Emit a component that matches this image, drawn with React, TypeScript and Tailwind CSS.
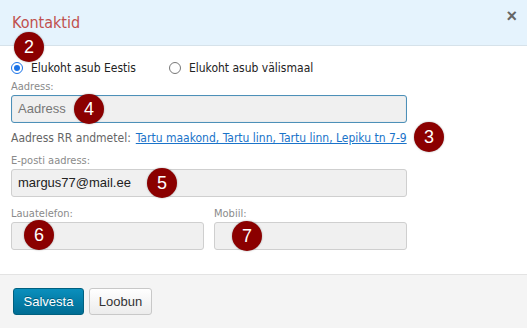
import React from 'react';

const Badge = ({ n, className }: { n: number; className: string }) => (
    <span
        className={`absolute w-[30px] h-[30px] rounded-full bg-[#8b0000] text-white flex items-center justify-center text-[18px] leading-none shadow-[0_0_2px_rgba(0,0,0,0.35)] font-['Liberation_Sans',Arial,sans-serif] ${className}`}
    >
        {n}
    </span>
);

const Label = ({ children }: { children: React.ReactNode }) => (
    <div className="text-[11px] leading-[12px] text-[#8a8a8a] mb-[2px]">{children}</div>
);

const Field = ({ value, placeholder, focused }: { value?: string; placeholder?: string; focused?: boolean }) => (
    <div
        className={`h-[28px] rounded-[3px] bg-[#f0f0f0] border flex items-center px-[6px] text-[13px] font-['Liberation_Sans',Arial,sans-serif] ${
            focused ? 'border-[#4d90b8] shadow-[inset_0_0_1px_rgba(77,144,184,0.4)]' : 'border-[#cfcfcf]'
        }`}
    >
        {value ? <span className="text-[#222]">{value}</span> : <span className="text-[#777]">{placeholder}</span>}
    </div>
);

export default function App() {
    return (
        <div className="relative w-[527px] h-[328px] bg-white overflow-hidden font-['DejaVu_Sans_Condensed','DejaVu_Sans',Tahoma,sans-serif] text-[#333]">
            {/* Header */}
            <div className="h-[46px] bg-[#e5f3fd] border-b border-[#d6e2ea] flex items-start justify-between pl-[12px] pr-[10px]">
                <h2 className="mt-[11px] text-[16px] text-[#c0504d]">Kontaktid</h2>
                <span className="mt-[3px] text-[#666] text-[18px] font-bold font-['Liberation_Sans',Arial,sans-serif]">×</span>
            </div>

            {/* Body */}
            <div className="px-[11px] pt-[14px] w-[407px] box-content">
                <div className="flex items-center text-[12px] text-[#222] h-[16px]">
                    <label className="flex items-center gap-[8px]">
                        <span className="w-[12px] h-[12px] rounded-full border border-[#1a73e8] flex items-center justify-center">
                            <span className="w-[6px] h-[6px] rounded-full bg-[#1a73e8]" />
                        </span>
                        Elukoht asub Eestis
                    </label>
                    <label className="flex items-center gap-[8px] ml-[33px]">
                        <span className="w-[12px] h-[12px] rounded-full border border-[#777] bg-white" />
                        Elukoht asub välismaal
                    </label>
                </div>

                <div className="mt-[5px] w-[396px]">
                    <Label>Aadress:</Label>
                    <Field placeholder="Aadress" focused />
                </div>

                <div className="mt-[7px] text-[12px] h-[16px] flex items-center whitespace-nowrap">
                    <span className="text-[#666]">Aadress RR andmetel:</span>
                    <a className="ml-[5px] text-[#1a73c9] underline">Tartu maakond, Tartu linn, Tartu linn, Lepiku tn 7-9</a>
                </div>

                <div className="mt-[9px] w-[396px]">
                    <Label>E-posti aadress:</Label>
                    <Field value="margus77@mail.ee" />
                </div>

                <div className="mt-[11px] w-[396px] grid grid-cols-2 gap-[10px]">
                    <div>
                        <Label>Lauatelefon:</Label>
                        <Field />
                    </div>
                    <div>
                        <Label>Mobiil:</Label>
                        <Field />
                    </div>
                </div>
            </div>

            {/* Footer */}
            <div className="absolute left-0 right-0 bottom-0 h-[54px] bg-[#f4f4f4] border-t border-[#e3e3e3] flex items-center gap-[5px] px-[13px]">
                <button className="h-[27px] w-[71px] rounded-[3px] bg-gradient-to-b from-[#0a8fbd] to-[#006d94] border border-[#00607f] text-white text-[13px] font-['Liberation_Sans',Arial,sans-serif] [text-shadow:0_-1px_0_rgba(0,0,0,0.3)]">
                    Salvesta
                </button>
                <button className="h-[27px] w-[63px] rounded-[3px] bg-gradient-to-b from-white to-[#ececec] border border-[#c8c8c8] text-[#333] text-[13px] font-['Liberation_Sans',Arial,sans-serif]">
                    Loobun
                </button>
            </div>

            <Badge n={2} className="left-[14px] top-[32px]" />
            <Badge n={4} className="left-[74px] top-[94px]" />
            <Badge n={3} className="left-[414px] top-[122px]" />
            <Badge n={5} className="left-[147px] top-[168px]" />
            <Badge n={6} className="left-[24px] top-[220px]" />
            <Badge n={7} className="left-[232px] top-[221px]" />
        </div>
    );
}
